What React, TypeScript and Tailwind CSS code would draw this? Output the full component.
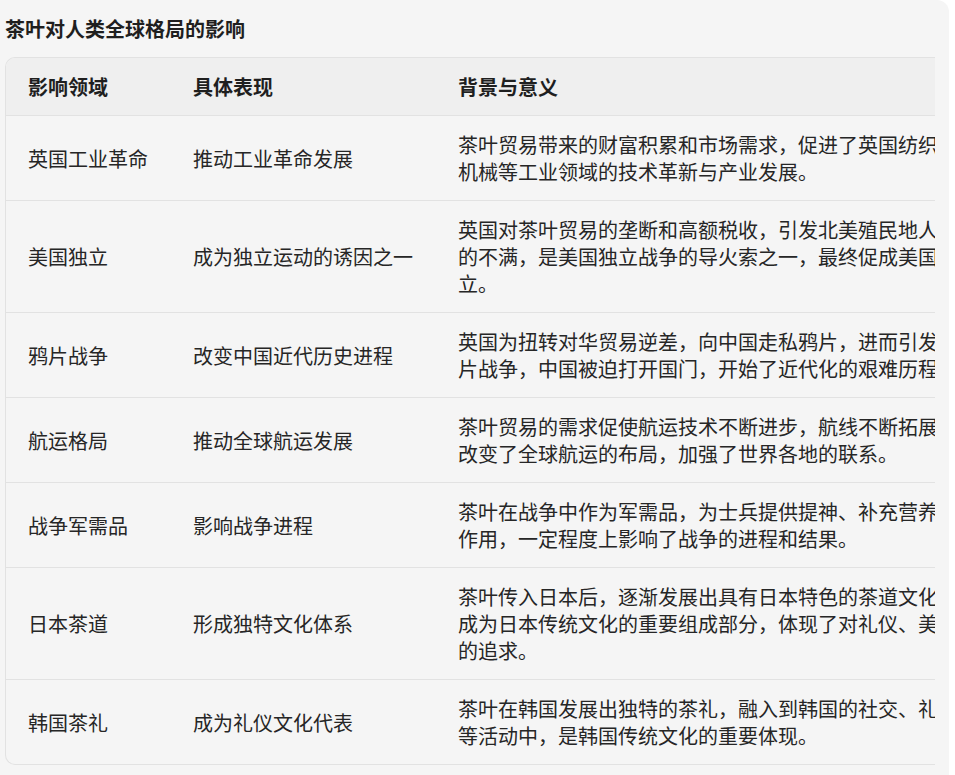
import React from "react";

const rows: { a: string; b: string; c: string }[] = [
  { a: "英国工业革命", b: "推动工业革命发展", c: "茶叶贸易带来的财富积累和市场需求，促进了英国纺织、机械等工业领域的技术革新与产业发展。" },
  { a: "美国独立", b: "成为独立运动的诱因之一", c: "英国对茶叶贸易的垄断和高额税收，引发北美殖民地人民的不满，是美国独立战争的导火索之一，最终促成美国独立。" },
  { a: "鸦片战争", b: "改变中国近代历史进程", c: "英国为扭转对华贸易逆差，向中国走私鸦片，进而引发鸦片战争，中国被迫打开国门，开始了近代化的艰难历程。" },
  { a: "航运格局", b: "推动全球航运发展", c: "茶叶贸易的需求促使航运技术不断进步，航线不断拓展，改变了全球航运的布局，加强了世界各地的联系。" },
  { a: "战争军需品", b: "影响战争进程", c: "茶叶在战争中作为军需品，为士兵提供提神、补充营养的作用，一定程度上影响了战争的进程和结果。" },
  { a: "日本茶道", b: "形成独特文化体系", c: "茶叶传入日本后，逐渐发展出具有日本特色的茶道文化，成为日本传统文化的重要组成部分，体现了对礼仪、美学的追求。" },
  { a: "韩国茶礼", b: "成为礼仪文化代表", c: "茶叶在韩国发展出独特的茶礼，融入到韩国的社交、礼仪等活动中，是韩国传统文化的重要体现。" },
];

export default function App() {
  return (
    <div
      className="w-[955px] h-[775px] bg-white overflow-hidden"
      style={{ fontFamily: '"Noto Sans CJK SC", "Noto Sans", sans-serif' }}
    >
      <div className="w-[949px] h-[775px] bg-[#f5f5f5] rounded-tr-[12px] pl-[5px]">
        <h2 className="pt-[15px] mb-[14px] text-[20px] leading-[28px] font-bold text-[#1f1f1f]">
          茶叶对人类全球格局的影响
        </h2>
        <div className="w-[930px] overflow-hidden border-l border-t border-b border-[#e2e2e2] rounded-l-[10px]">
          <div className="w-[984px] text-[20px] leading-[27px] text-[#262626]">
            <div className="grid grid-cols-[165px_265px_554px] bg-[#efefef] border-b border-[#e2e2e2] font-bold text-[#1f1f1f]">
              <div className="px-[22px] py-[15px]">影响领域</div>
              <div className="px-[22px] py-[15px]">具体表现</div>
              <div className="px-[22px] py-[15px]">背景与意义</div>
            </div>
            {rows.map((r, i) => (
              <div
                key={i}
                className={
                  "grid grid-cols-[165px_265px_554px] items-center " +
                  (i < rows.length - 1 ? "border-b border-[#e2e2e2]" : "")
                }
              >
                <div className="px-[22px] py-[15px]">{r.a}</div>
                <div className="px-[22px] py-[15px]">{r.b}</div>
                <div className="px-[22px] py-[15px]">{r.c}</div>
              </div>
            ))}
          </div>
        </div>
      </div>
    </div>
  );
}
